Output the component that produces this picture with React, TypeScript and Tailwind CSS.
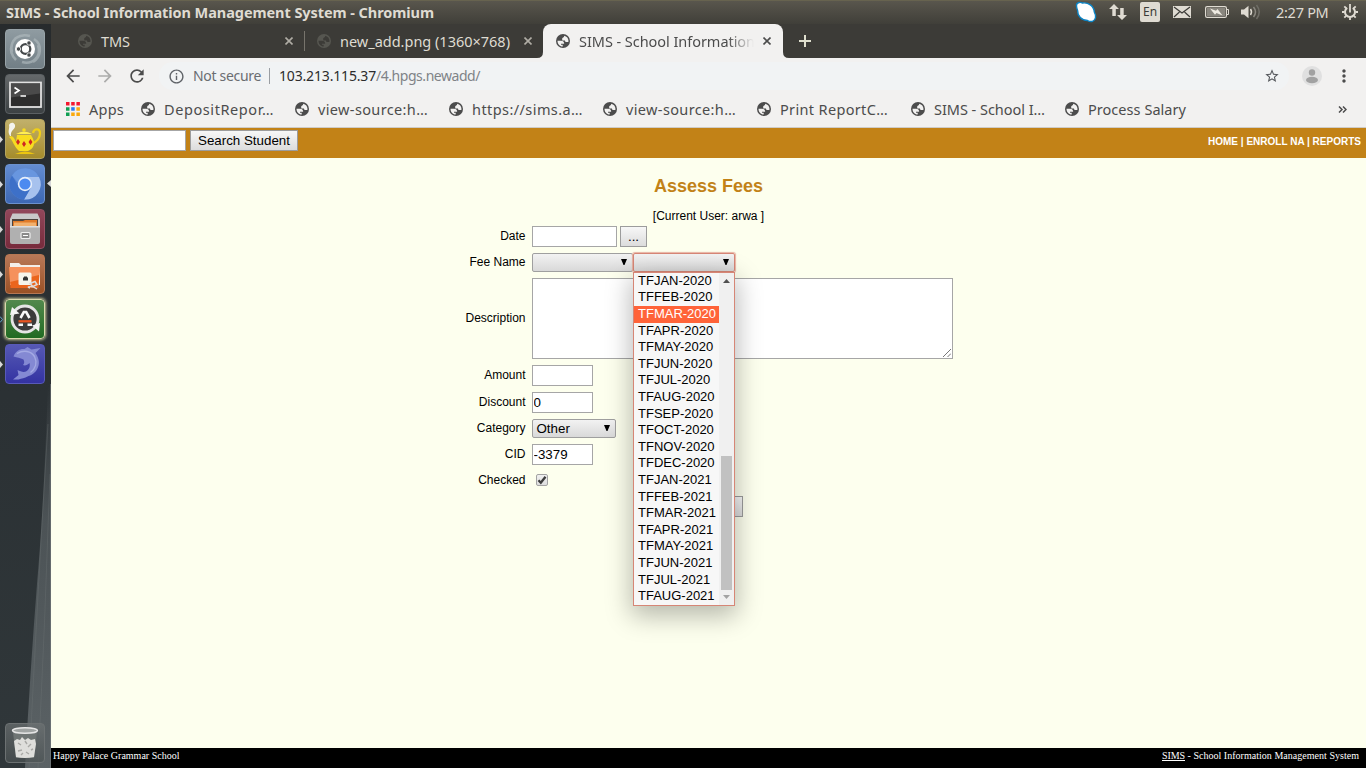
import { useLayoutEffect, useRef, type ReactNode } from "react";
import { MdArrowBack, MdArrowForward, MdRefresh, MdInfoOutline, MdStarBorder, MdMoreVert } from "react-icons/md";

/** One line of text, tracked so that it fills exactly `width` pixels. */
function FitText({ text, width, className = "" }: { text: string; width: number; className?: string }) {
  const ref = useRef<HTMLSpanElement>(null);
  useLayoutEffect(() => {
    const el = ref.current;
    if (!el) return;
    el.style.letterSpacing = "0px";
    const natural = el.getBoundingClientRect().width;
    el.style.letterSpacing = `${(width - natural) / text.length}px`;
  }, [text, width]);
  return (
    <span ref={ref} className={`inline-block shrink-0 whitespace-pre ${className}`}>
      {text}
    </span>
  );
}

function Globe({ className = "" }: { className?: string }) {
  return (
    <svg viewBox="1 1 14 14" className={`size-[14px] shrink-0 ${className}`}>
      <circle cx="8" cy="8" r="7" fill="currentColor" />
      <path
        className="fill-[var(--land)]"
        d="M9.200 2.700c2.600.4 4.300 2.700 4.300 5.300l-.2 1h-2c-1 0-1.300-.7-1.300-1.500H7.200V5.600c0-1.300 2-.8 2-2.900zM2.500 7.700h3.600c1.900.1 3 1.200 3.100 3H6v1.100h1.700v1.700C4.600 13.400 2.500 11 2.500 7.700z"
      />
    </svg>
  );
}

function CloseX({ className }: { className: string }) {
  return (
    <svg viewBox="0 0 8 8" className={`size-2 shrink-0 ${className}`} fill="none" stroke="currentColor" strokeWidth="1.6">
      <path d="M.5.5l7 7M7.500.5l-7 7" />
    </svg>
  );
}

function TitleBar() {
  return (
    <header className="flex h-6 shrink-0 items-start justify-between border-t border-[#67634f] bg-gradient-to-b from-[#59564d] to-[#403f39] pr-2 pl-[6px] text-[#dfdbd2]">
      <FitText text="SIMS - School Information Management System - Chromium" width={428} className="text-[14.5px] leading-[22px] font-bold" />
      <div className="flex h-[22px] items-center">
        <svg viewBox="0 0 22 22" className="mr-[12px] size-[22px]">
          <path d="M1.500 5C1 1.500 5 .8 7.500 2 13 1 19 5 19.300 11c2.200 4 1.700 8-1.800 9.300-2 .6-3.500.2-5-.8C6.500 19.500 2.500 15 2.600 9.500 2 8 1.600 6.500 1.500 5z" fill="#fff" stroke="#0c83c3" strokeWidth="1.400" />
        </svg>
        <svg viewBox="0 0 18 16" className="mr-[13px] h-4 w-[18px]" fill="currentColor">
          <path d="M5 0l5 5H6.800v7H3.300V5H0zM13 16l-5-5h3.200V4h3.500v7H18z" />
        </svg>
        <div className="mr-[13px] flex h-5 w-5 items-center justify-center rounded-[2px] bg-[#dfdbd2] text-[#3c3b37]">
          <FitText text="En" width={14} className="text-[12px] leading-5" />
        </div>
        <svg viewBox="0 0 18 12" className="mr-[14px] h-3 w-[18px]">
          <path d="M0 0h18v12H0z" fill="#dfdbd2" />
          <path d="M1 1l8 6 8-6M1 11l5.500-5M17 11l-5.500-5" fill="none" stroke="#3c3b37" strokeWidth="1.200" />
        </svg>
        <svg viewBox="0 0 24 12" className="mr-[12px] h-3 w-6">
          <rect x=".6" y=".6" width="20.800" height="10.800" rx="1.500" fill="none" stroke="#dfdbd2" strokeWidth="1.200" />
          <path d="M22 3.500h1.500v5H22" fill="none" stroke="#dfdbd2" />
          <path d="M2 2h18v8H2z" fill="#89867e" />
          <path d="M5 2.500l6 2.300 1.500-1.800 5 6.500-6-2.500L10 8.800z" fill="#eeeae1" />
        </svg>
        <svg viewBox="0 0 20 16" className="mr-[15px] h-4 w-5" fill="none" strokeWidth="1.500">
          <path d="M0 5.500h3L7.500 1.800v12.400L3 10.500H0z" fill="#dfdbd2" />
          <path d="M9.500 5q2 3 0 6" stroke="#dfdbd2" />
          <path d="M12.500 3q4 5 0 10" stroke="#8b8880" />
          <path d="M15.500 1q5.500 7 0 14" stroke="#6f6d66" />
        </svg>
        <FitText text="2:27 PM" width={52.5} className="mr-[13.5px] text-[14.5px] leading-[22px]" />
        <svg viewBox="0 0 16 16" className="size-4" fill="none" stroke="currentColor">
          <path d="M5.200 3.800a5 5 0 1 0 5.600 0" strokeWidth="2" />
          <path d="M8 0v8.500M0 8h2.500M13.500 8H16M8 13.500V16M2.300 2.300l1.800 1.800M13.700 2.300l-1.800 1.800M2.300 13.700l1.800-1.800M13.700 13.700l-1.800-1.800" strokeWidth="1.800" />
        </svg>
      </div>
    </header>
  );
}

function Tile({ className, children, running = false }: { className: string; children: ReactNode; running?: boolean }) {
  return (
    <div className="flex h-10 w-full shrink-0 items-center">
      <span className="flex w-[5px] shrink-0">
        {running && (
          <svg viewBox="0 0 4 7" className="h-[7px] w-1 fill-[#d8d8d8]">
            <path d="M0 0l3 3.500L0 7z" />
          </svg>
        )}
      </span>
      <div className={`flex size-10 shrink-0 items-center justify-center rounded-[4px] border ${className}`}>{children}</div>
    </div>
  );
}

function Launcher() {
  return (
    <nav className="relative flex w-[51px] shrink-0 flex-col overflow-hidden bg-gradient-to-b from-[#272b2d] via-[#2b3134] to-[#30373a] pt-[5px] pb-[5px]">
      <svg viewBox="0 0 51 744" className="absolute inset-0 h-full w-full">
        <defs>
          <linearGradient id="edge" x1="0" y1="0" x2="0" y2="1">
            <stop offset="0" stopColor="#5b6265" stopOpacity="0" />
            <stop offset=".35" stopColor="#565d60" stopOpacity=".75" />
            <stop offset="1" stopColor="#5b6265" />
          </linearGradient>
        </defs>
        <path d="M51 360H48Q44 480 37 560Q30 650 25 744H51z" fill="url(#edge)" />
        <path d="M48 400Q38 560 29 744M50 450Q45 600 38 744" fill="none" stroke="#747a7c" strokeWidth="1" opacity=".3" />
        <path d="M50.500 360V744" stroke="#7b8183" strokeWidth="1" opacity=".5" />
      </svg>
      <div className="relative flex flex-1 flex-col gap-[5px]">
        <Tile className="border-[#98a3a8] bg-gradient-to-b from-[#8f9ba1] to-[#727f86]">
          <svg viewBox="0 0 38 38" className="size-[38px]" fill="none">
            <path d="M6 22C3 9 14 3 24 6M32 15c4 12-6 20-16 17M10 30C0 20 7 7 15 6M28 9c9 6 7 18-1 23" stroke="#b4bec2" strokeWidth="2.500" opacity=".6" />
            <circle cx="19" cy="19" r="10" fill="#fff" />
            <circle cx="19.500" cy="19" r="4.800" stroke="#44484a" strokeWidth="2.300" />
            <g fill="#44484a" stroke="#fff" strokeWidth=".8">
              <circle cx="12.500" cy="19" r="2.200" />
              <circle cx="23" cy="13" r="2.200" />
              <circle cx="23" cy="25" r="2.200" />
            </g>
          </svg>
        </Tile>
        <Tile className="border-[#5b6063] bg-gradient-to-b from-[#65696b] to-[#3c4143]">
          <svg viewBox="0 0 38 38" className="size-[38px]">
            <rect x="4" y="7.500" width="31" height="24.500" fill="#2d2d2d" stroke="#e1e1e1" strokeWidth="1.800" />
            <path d="M5 8.500h29v10L5 22.500z" fill="#4a4a4a" />
            <path d="M8.500 12.500l4.500 3-4.500 3M14.500 21h5.500" fill="none" stroke="#fff" strokeWidth="1.700" />
          </svg>
        </Tile>
        <Tile running className="border-[#b5a560] bg-gradient-to-b from-[#c1b06a] to-[#a58c2a]">
          <svg viewBox="0 0 38 38" className="size-[38px]">
            <path d="M27 13c1-5 7-5 7 0 0 6-3 9-9 11" fill="none" stroke="#f0cf17" strokeWidth="2.200" />
            <path d="M3 17c4-2 5 1 7 5l1-7h14c6 9 2 14-3 16H13C8 27 7 20 3 17z" fill="#f8dc20" />
            <path d="M9 34q10-5 20 0z" fill="#edc60f" />
            <path d="M10 14q8-5 16 0z" fill="#ffee55" />
            <circle cx="18" cy="10" r="1.800" fill="#f8dc20" />
            <path d="M12 19l2 3-2 3-2-3zM18 21l2 3-2 3-2-3zM24.500 19l2 3-2 3-2-3z" fill="#cf2622" />
            <path d="M4 16C1 11 4 9 3 5c2-4 7-2 6 2-1 3-5 4-4 9z" fill="#f4f4ee" />
          </svg>
        </Tile>
        <div className="relative">
          <Tile running className="border-[#6b91cd] bg-gradient-to-b from-[#638cd0] to-[#3d68b4]">
            <svg viewBox="0 0 38 38" className="size-[38px]">
              <circle cx="19" cy="19" r="15.500" fill="#5583d3" />
              <path d="M19 12h14A15.500 15.500 0 0 1 18 34.500L25 22.500z" fill="#a7c2ee" />
              <path d="M6 10.500A15.500 15.500 0 0 0 18 34.500L25 22.500H13z" fill="#3d70c8" />
              <path d="M6 10.500A15.500 15.500 0 0 1 33 12H19l-6 7z" fill="#6896df" />
              <circle cx="19" cy="19" r="7.200" fill="#e7effb" />
              <circle cx="19" cy="19" r="5.600" fill="#4c8af0" />
            </svg>
          </Tile>
          <svg viewBox="0 0 4 7" className="absolute top-[16px] left-[47px] h-[7px] w-1 fill-[#d8d8d8]">
            <path d="M4 0L0 3.500 4 7z" />
          </svg>
        </div>
        <Tile running className="border-[#965163] bg-gradient-to-b from-[#91475a] to-[#772b3c]">
          <svg viewBox="0 0 38 38" className="size-[38px]">
            <path d="M6.500 3.500h25L34 9v23H4V9z" fill="#c9c9c9" />
            <path d="M6 9h26v8H6z" fill="#4d443e" />
            <path d="M7 11h10l2-1h12v7H7z" fill="#e07a28" />
            <path d="M8 12.500h22V17H8z" fill="#f1b06d" />
            <path d="M4 16h30v16q0 2-2 2H6q-2 0-2-2z" fill="#b0b0b0" />
            <path d="M4 16h30v1.500H4z" fill="#dedede" />
            <rect x="15" y="22.500" width="9" height="6" rx="1" fill="#8a8a8a" stroke="#efefef" strokeWidth="1.200" />
            <path d="M17 25.500h5" stroke="#fff" />
          </svg>
        </Tile>
        <Tile running className="border-[#b67753] bg-gradient-to-b from-[#b87857] to-[#9a5125]">
          <svg viewBox="0 0 38 38" className="size-[38px]">
            <path d="M4 8h9l2 2h19v20H4z" fill="#f3eee9" />
            <path d="M3 12h31l-1.500 21h-28z" fill="#eb651d" />
            <path d="M3 12h31l-1 8L4 27z" fill="#f5915c" />
            <rect x="12.500" y="17.500" width="13" height="12.500" rx="1.500" fill="#f6f4ec" />
            <path d="M17 25.500v-3h1v-1h3v1h1v3z" fill="#333" />
            <path d="M24 28.500l5-2 2 3-4 2zM24 33c-5-1 2-3 7 1" fill="none" stroke="#ddd" strokeWidth="1.500" />
          </svg>
        </Tile>
        <div className="relative">
          <Tile className="border-[#d9d9ad] bg-gradient-to-b from-[#52894d] to-[#216b22] shadow-[0_0_3px_1px_#c8c89a]">
            <svg viewBox="0 0 38 38" className="size-[38px]">
              <circle cx="19" cy="19" r="13" fill="#3b3b3b" stroke="#e5e5e5" strokeWidth="2.800" />
              <path d="M4 15l2-8 7.500 6.500zM34 23l-1 8.500-7-6z" fill="#f4f4f4" />
              <path d="M14.500 18l3.300-6h2.400l3.300 6M12.500 24.800h4.500M21.500 24.800H26" fill="none" stroke="#f8f8f8" strokeWidth="2.600" />
              <path d="M12.500 21.300h13" stroke="#e95420" strokeWidth="2.300" />
            </svg>
          </Tile>
          <svg viewBox="0 0 4 7" className="absolute top-[17px] left-0 h-[7px] w-1" fill="none" stroke="#63a7c9">
            <path d="M0 .5l2.500 3L0 6.500" />
          </svg>
        </div>
        <Tile running className="border-[#585ab8] bg-gradient-to-b from-[#5658b4] to-[#3432a2]">
          <svg viewBox="0 0 38 38" className="size-[38px]">
            <path d="M7.500 11.500C9.500 6 14 3.500 18.500 4l3-2 4 2.500 9-1.500-5 5c4 6 4.500 11 1.500 16.500-3 5-7.500 6-11.500 8-4 1-6 2.500-12.500 2l5.500-4.500-1-5c3 1.500 6 2.500 8.500 1.500 3-1.500 4.500-5 3.500-8.500-2 2-4.500 3-6.500 2 1.500-1.500 1.500-3.500.5-5.500-3.500-2-6-1.500-10-3z" fill="#8489d3" />
            <path d="M11 8.500c7-4 14-2.500 17.500 3 3 6 1 12-4 16" fill="none" stroke="#a4aae4" strokeWidth="1.400" />
          </svg>
        </Tile>
        <div className="flex-1" />
        <Tile className="border-[#6c7172] bg-gradient-to-b from-[#6e7374]/70 to-[#4c5354]/70">
          <svg viewBox="0 0 38 38" className="size-[38px]">
            <path d="M7 8h24l-3 26H10z" fill="#6f7574" />
            <path d="M8 17l3-2 3 1 2-3 3 3 3-2 3 2 4-1 1 5-2 13q-9 2-18 0z" fill="#dededb" />
            <path d="M12 19l3 2M19 17l2 3M25 20l-3 3M12 27l4-1M20 28l3 2M25 26l2-1M15 31l2-2" fill="none" stroke="#a9a9a6" strokeWidth="1.400" />
            <ellipse cx="19" cy="6.500" rx="12.500" ry="2.800" fill="#a0a4a3" stroke="#e6e6e6" strokeWidth="1.400" />
          </svg>
        </Tile>
      </div>
    </nav>
  );
}

function TabStrip() {
  return (
    <div className="flex h-[34px] shrink-0 bg-[#3c3b37] text-[14.5px] leading-[20px] text-[#dfdbd2] [--land:#3c3b37]">
      <div className="flex w-[254px] items-center pl-[27px]">
        <Globe className="text-[#565650]" />
        <FitText text="TMS" width={29} className="ml-[9px]" />
        <CloseX className="ml-auto text-[#b0ada5]" />
        <span className="ml-[11px] h-5 w-px bg-[#77746c]" />
      </div>
      <div className="flex w-[238px] items-center pl-[12px]">
        <Globe className="text-[#565650]" />
        <FitText text="new_add.png (1360×768)" width={170} className="ml-[9px]" />
        <CloseX className="ml-auto text-[#b0ada5]" />
        <span className="w-[11px]" />
      </div>
      <div className="relative flex w-[240px] items-center rounded-t-lg bg-[#f2f1f0] pl-[13px] text-[#4c4c4c] [--land:#f2f1f0]">
        <svg viewBox="0 0 6 6" className="absolute bottom-0 -left-1.5 size-1.5 fill-[#f2f1f0]">
          <path d="M6 0v6H0q6 0 6-6z" />
        </svg>
        <svg viewBox="0 0 6 6" className="absolute -right-1.5 bottom-0 size-1.5 fill-[#f2f1f0]">
          <path d="M0 0v6h6Q0 6 0 0z" />
        </svg>
        <Globe />
        <span className="ml-[9px] w-[175px] overflow-hidden [mask-image:linear-gradient(to_right,#000_85%,transparent)]">
          <FitText text="SIMS - School Information" width={176} className="align-top" />
        </span>
        <CloseX className="ml-auto text-[#4c4c4c]" />
        <span className="w-3" />
      </div>
      <div className="flex items-center pl-4">
        <svg viewBox="0 0 12 12" className="size-3" stroke="#dfdfce" strokeWidth="2">
          <path d="M6 0v12M0 6h12" />
        </svg>
      </div>
    </div>
  );
}

function Toolbar() {
  return (
    <div className="flex h-[36px] shrink-0 items-center pl-[12px] text-[14px] leading-5">
      <MdArrowBack className="size-5 text-[#4c4c4c]" />
      <MdArrowForward className="ml-3 size-5 text-[#acacab]" />
      <MdRefresh className="ml-3 size-5 text-[#4c4c4c]" />
      <div className="ml-[12px] flex h-7 w-[1130px] items-center rounded-full bg-[#f1f3f4] pl-[9px]">
        <MdInfoOutline className="size-[17px] text-[#5f6368]" />
        <FitText text="Not secure" width={68} className="ml-[8px] text-[#6a6d71]" />
        <span className="mr-[9px] ml-[8px] h-4 w-px bg-[#9a9ea3]" />
        <FitText text="103.213.115.37" width={97} className="text-[#2c2c2c]" />
        <FitText text="/4.hpgs.newadd/" width={104} className="text-[#7f8387]" />
        <MdStarBorder className="mr-[9px] ml-auto size-4 text-[#55585c]" />
      </div>
      <svg viewBox="0 0 20 20" className="ml-[13px] size-5">
        <circle cx="10" cy="10" r="10" fill="#e0e0e0" />
        <circle cx="10" cy="6.500" r="3.200" fill="#a1a1a1" />
        <ellipse cx="10" cy="14" rx="6" ry="3.200" fill="#a1a1a1" />
      </svg>
      <MdMoreVert className="ml-[12px] size-5 text-[#4c4c4c]" />
    </div>
  );
}

const bookmarks: [string, number][] = [
  ["DepositRepor…", 110],
  ["view-source:h…", 110],
  ["https://sims.a…", 111],
  ["view-source:h…", 110],
  ["Print ReportC…", 108],
  ["SIMS - School I…", 111],
  ["Process Salary", 98],
];

function BookmarksBar() {
  return (
    <div className="flex h-[34px] shrink-0 items-center border-b border-[#cfccc8] pr-[19px] pb-[3px] pl-[15px] text-[14.5px] leading-5 text-[#4c4c4c] [--land:#f2f1f0]">
      <svg viewBox="0 0 14 14" className="size-[14px]">
        <path d="M0 0h3.500v3.500H0zM5.200 0h3.500v3.500H5.200zM10.400 0h3.500v3.500h-3.500z" fill="#f4182f" />
        <path d="M0 5.200h3.500v3.500H0zM0 10.400h3.500v3.500H0z" fill="#119f53" />
        <path d="M5.200 5.200h3.500v3.500H5.200z" fill="#2879f0" />
        <path d="M10.400 5.200h3.500v3.500h-3.500zM5.200 10.400h3.500v3.500H5.200zM10.400 10.400h3.500v3.500h-3.500z" fill="#faa90c" />
      </svg>
      <FitText text="Apps" width={35} className="ml-[9px]" />
      <div className="ml-[17px] flex">
        {bookmarks.map(([label, width], i) => (
          <div key={i} className="flex w-[154px] items-center gap-[9px]">
            <Globe />
            <FitText text={label} width={width} />
          </div>
        ))}
      </div>
      <svg viewBox="0 0 9 7" className="ml-auto h-[7px] w-[9px]" fill="none" stroke="#4c4c4c" strokeWidth="1.500">
        <path d="M1 .5l3 3-3 3M5 .5l3 3-3 3" />
      </svg>
    </div>
  );
}

function Field({ label, children }: { label: string; children?: ReactNode }) {
  return (
    <div className="flex items-center gap-[6.500px] py-[3px]">
      <span className="w-[474.500px] shrink-0 pb-[2px] text-right text-[12px] leading-[14px]">{label}</span>
      <div className="flex">{children}</div>
    </div>
  );
}

const inputClass = "block h-[21px] border border-[#a6a6a6] bg-white px-[0.5px] text-[13.33px] leading-[17px] text-black outline-none";
const buttonClass = "flex items-center justify-center border border-[#9c9c9c] bg-gradient-to-b from-[#f7f7f7] to-[#dcdcdc] text-[13.33px] text-black";

function SelectBox({ className, value = "" }: { className: string; value?: string }) {
  return (
    <div className={`flex h-[19px] items-center justify-between rounded-[2px] border bg-gradient-to-b from-[#f2f2f2] to-[#d9d9d9] pr-[5px] pl-[3.5px] text-[13.33px] leading-[17px] ${className}`}>
      <span>{value}</span>
      <svg viewBox="0 0 6 7" className="mb-[2px] h-[6px] w-[6px] fill-black" preserveAspectRatio="none">
        <path d="M0 0h6L3.500 7h-1z" />
      </svg>
    </div>
  );
}

const months = ["JAN", "FEB", "MAR", "APR", "MAY", "JUN", "JUL", "AUG", "SEP", "OCT", "NOV", "DEC"];
const options = [...months.map((m) => `TF${m}-2020`), ...months.slice(0, 8).map((m) => `TF${m}-2021`)];

function OptionList() {
  return (
    <div className="absolute top-[19px] left-0 z-20 flex h-[334px] w-[102px] border border-[#d68676] bg-[#f7f7f7] shadow-[0_8px_24px_2px_rgba(0,0,0,0.28)]">
      <ul className="mt-[-0.2px] w-[85px]">
        {options.map((o) => (
          <li key={o} className={`h-[16.6px] pl-[4px] text-[13px] leading-[16.6px] whitespace-nowrap ${o === "TFMAR-2020" ? "bg-[#ff6339] text-white" : "text-black"}`}>
            {o}
          </li>
        ))}
      </ul>
      <div className="flex flex-1 flex-col items-center bg-[#f0f0f0] pt-[6px] pb-[6px]">
        <svg viewBox="0 0 7 4" className="h-1 w-[7px] fill-[#505050]">
          <path d="M0 4l3.500-4L7 4z" />
        </svg>
        <div className="mt-[173px] h-[134px] w-[11px] bg-[#c1c1c1]" />
        <svg viewBox="0 0 7 4" className="mt-[5px] h-1 w-[7px] fill-[#a3a3a3]">
          <path d="M0 0h7L3.500 4z" />
        </svg>
      </div>
    </div>
  );
}

function SimsPage() {
  return (
    <main className="flex flex-1 flex-col bg-[#fdffee] font-['Liberation_Sans',sans-serif] text-black">
      <div className="flex h-[30px] shrink-0 items-start bg-[#c28217] pt-[2px] pr-[5px] pl-[2px]">
        <input className={`${inputClass} w-[133px]`} />
        <button className={`${buttonClass} ml-[4px] h-[21px] w-[108px]`}>Search Student</button>
        <FitText text="HOME | ENROLL NA | REPORTS" width={153} className="mt-[6px] ml-auto text-[10px] leading-[12px] font-bold text-white" />
      </div>
      <div className="flex flex-1 flex-col pt-[17px]">
        <h1 className="text-center text-[18px] leading-[22px] font-bold text-[#c28217]">Assess Fees</h1>
        <p className="mt-[12px] text-center text-[12px] leading-[14px]">[Current User: arwa ]</p>
        <div>
          <Field label="Date">
            <input className={`${inputClass} w-[85px]`} />
            <button className={`${buttonClass} ml-[3px] h-[21px] w-[27px]`}>...</button>
          </Field>
          <Field label="Fee Name">
            <SelectBox className="w-[101px] border-[#9f9f9f]" />
            <div className="relative">
              <SelectBox className="w-[102px] border-[#d68676] shadow-[0_0_1px_1px_#e9b3a3]" />
              <OptionList />
            </div>
          </Field>
          <Field label="Description">
            <div className="flex h-[81px] w-[421px] items-end justify-end border border-[#a6a6a6] bg-white p-px">
              <svg viewBox="0 0 8 8" className="size-2" stroke="#777" strokeWidth="1">
                <path d="M0 8l8-8M4.500 8L8 4.500" />
              </svg>
            </div>
          </Field>
          <Field label="Amount">
            <input className={`${inputClass} w-[61px]`} />
          </Field>
          <Field label="Discount">
            <input className={`${inputClass} w-[61px]`} defaultValue="0" />
          </Field>
          <Field label="Category">
            <SelectBox className="w-[84px] border-[#9f9f9f]" value="Other" />
          </Field>
          <Field label="CID">
            <input className={`${inputClass} w-[61px]`} defaultValue="-3379" />
          </Field>
          <Field label="Checked">
            <div className="flex h-[19px] items-start pt-[3px] pl-[4px]">
              <div className="flex size-3 items-center justify-center rounded-[2px] border border-[#a3a3a3] bg-gradient-to-b from-[#f0f0f0] to-[#dedede]">
                <svg viewBox="0 0 10 10" className="size-[10px]" fill="none" stroke="#3d3d3d" strokeWidth="2.300">
                  <path d="M1.500 5.300l2.300 2.400 4.700-6" />
                </svg>
              </div>
            </div>
          </Field>
          <div className="flex justify-center py-[3px]">
            <button className={`${buttonClass} h-[21px] w-[69px]`} />
          </div>
        </div>
      </div>
      <footer className="flex h-5 shrink-0 justify-between bg-black pt-[2px] pr-[7px] pl-[2px] font-['Liberation_Serif',serif] text-[10px] leading-[12px] text-white">
        <FitText text="Happy Palace Grammar School" width={126.5} />
        <span className="flex">
          <FitText text="SIMS" width={23} className="underline" />
          <FitText text=" - School Information Management System" width={174} />
        </span>
      </footer>
    </main>
  );
}

export default function App() {
  return (
    <div className="flex h-[768px] w-[1366px] flex-col overflow-hidden font-['Noto_Sans',sans-serif]">
      <TitleBar />
      <div className="flex min-h-0 flex-1">
        <Launcher />
        <div className="flex w-[1315px] flex-col bg-[#f2f1f0]">
          <TabStrip />
          <Toolbar />
          <BookmarksBar />
          <SimsPage />
        </div>
      </div>
    </div>
  );
}
